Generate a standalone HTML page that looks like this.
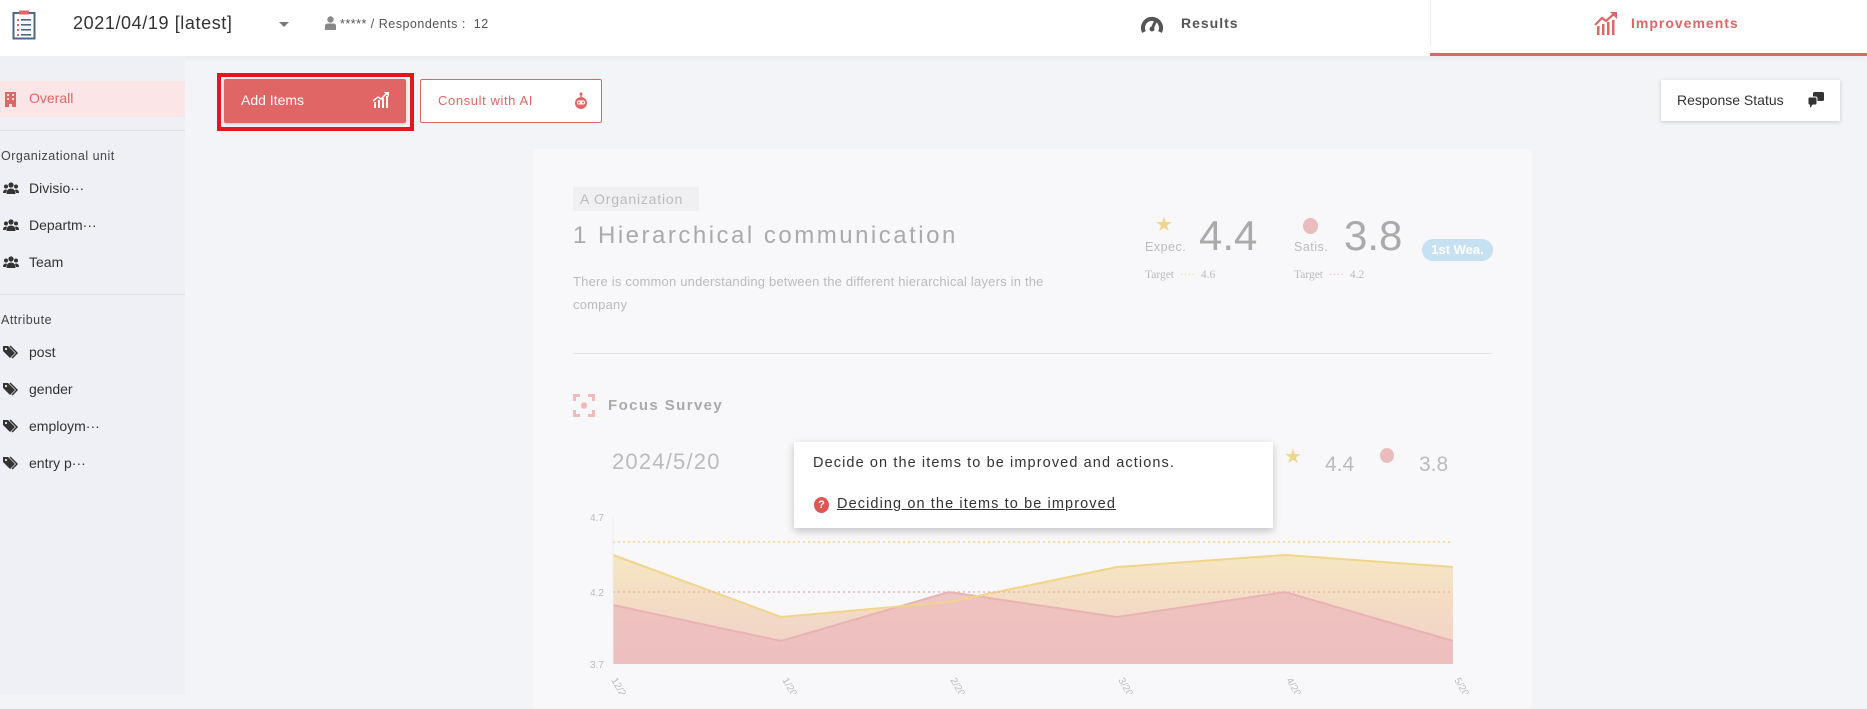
<!DOCTYPE html>
<html><head><meta charset="utf-8">
<style>
*{box-sizing:border-box;margin:0;padding:0}
body{width:1867px;height:694px;overflow:hidden;background:#f3f4f8;font-family:"Liberation Sans",sans-serif;position:relative}
.abs{position:absolute}
.hdr{left:0;top:0;width:1867px;height:56px;background:#fff;box-shadow:0 2px 6px rgba(0,0,0,.05)}
.side{left:0;top:56px;width:185px;height:638px;background:#eff0f6}
.sitem{position:absolute;left:29px;font-size:14px;color:#333;display:flex;align-items:center}
.sec{position:absolute;left:1px;font-size:12.5px;color:#444;letter-spacing:.5px}
.card{left:533px;top:149px;width:999px;height:560px;background:#f8f8fa;border-radius:4px}
</style></head><body>
<div class="abs hdr"></div>
<svg class="abs" style="left:12px;top:10px" width="24" height="30" viewBox="0 0 24 30"><rect x="1.5" y="3" width="21" height="25.5" fill="#fff" stroke="#4a6785" stroke-width="2"/><rect x="7" y="0.5" width="10" height="4" fill="#e06666"/><g fill="#e06666"><rect x="5" y="9" width="2" height="2"/><rect x="5" y="14" width="2" height="2"/><rect x="5" y="19" width="2" height="2"/><rect x="5" y="24" width="2" height="2"/></g><g fill="#4a6785"><rect x="9" y="9" width="10" height="1.6"/><rect x="9" y="14" width="10" height="1.6"/><rect x="9" y="19" width="10" height="1.6"/><rect x="9" y="24" width="10" height="1.6"/></g></svg>
<div class="abs" style="left:73px;top:13px;font-size:18px;color:#333;letter-spacing:.6px">2021/04/19 [latest]</div>
<div class="abs" style="left:279px;top:22px;width:0;height:0;border-left:5px solid transparent;border-right:5px solid transparent;border-top:5px solid #777"></div>
<svg class="abs" style="left:325px;top:16px" width="11" height="14" viewBox="0 0 11 14"><circle cx="5.5" cy="3.5" r="3.2" fill="#888"/><path d="M0 14V10Q0 7.5 3 7.5H8Q11 7.5 11 10V14Z" fill="#888"/></svg>
<div class="abs" style="left:340px;top:17px;font-size:12.5px;color:#555;letter-spacing:.5px">***** / Respondents :&nbsp; 12</div>
<svg class="abs" style="left:1141px;top:14px" width="22" height="20" viewBox="0 0 22 20"><path d="M3 18A9 9 0 1 1 19 18" fill="none" stroke="#555" stroke-width="4"/><path d="M11 15L15 6" stroke="#555" stroke-width="3"/><circle cx="11" cy="15" r="2.5" fill="#555"/></svg>
<div class="abs" style="left:1181px;top:15px;font-size:14px;font-weight:bold;color:#555;letter-spacing:1px">Results</div>
<div class="abs" style="left:1430px;top:0;width:1px;height:46px;background:#eee"></div>
<div class="abs" style="left:1430px;top:53px;width:437px;height:3px;background:#e06666"></div>
<svg class="abs" style="left:1594px;top:11px" width="24" height="24" viewBox="0 0 24 24"><g fill="#e06666"><rect x="3" y="15" width="2.5" height="9"/><rect x="8" y="13" width="2.5" height="11"/><rect x="13" y="11" width="2.5" height="13"/><rect x="18" y="9" width="2.5" height="15"/></g><path d="M1 14L8 7L12 10L21 2" fill="none" stroke="#e06666" stroke-width="2.2"/><path d="M16 1H23V8Z" fill="#e06666"/></svg>
<div class="abs" style="left:1631px;top:15px;font-size:14px;font-weight:bold;color:#e06666;letter-spacing:1px">Improvements</div>
<div class="abs side"></div>
<div class="abs" style="left:0;top:81px;width:185px;height:36px;background:#fbe5e6"></div>
<svg class="abs" style="left:5px;top:92px" width="11" height="15" viewBox="0 0 11 15"><path d="M0 0H11V15H7V12H4V15H0Z" fill="#e06666"/><g fill="#fbe5e6"><rect x="2" y="2" width="2" height="2"/><rect x="7" y="2" width="2" height="2"/><rect x="2" y="6" width="2" height="2"/><rect x="7" y="6" width="2" height="2"/></g></svg>
<div class="sitem" style="top:90px;color:#e06666">Overall</div>
<div class="abs" style="left:0;top:130px;width:185px;height:1px;background:#dfe0e6"></div>
<div class="sec" style="top:149px">Organizational unit</div>
<div class="abs" style="left:0;top:294px;width:185px;height:1px;background:#dfe0e6"></div>
<div class="sec" style="top:313px">Attribute</div>
<svg width="0" height="0" style="position:absolute"><defs>
<g id="ppl"><circle cx="8" cy="3" r="2.6" fill="#333"/><path d="M3.5 12Q3.5 6.5 8 6.5Q12.5 6.5 12.5 12Z" fill="#333"/><circle cx="3" cy="4.5" r="2" fill="#333"/><path d="M0 11Q0 7.5 3 7.5L4 8L3 11Z" fill="#333"/><circle cx="13" cy="4.5" r="2" fill="#333"/><path d="M16 11Q16 7.5 13 7.5L12 8L13 11Z" fill="#333"/></g>
<g id="tag"><path d="M0 1V6L7 13L12 8L5 1Z" fill="#333"/><path d="M7 1L14 8L9 13" fill="none" stroke="#333" stroke-width="1.5"/><circle cx="3" cy="4" r="1.1" fill="#eff0f6"/></g>
</defs></svg>
<svg class="abs" style="left:3px;top:182px" width="16" height="13"><use href="#ppl"/></svg>
<div class="sitem" style="top:180px">Divisio···</div>
<svg class="abs" style="left:3px;top:219px" width="16" height="13"><use href="#ppl"/></svg>
<div class="sitem" style="top:217px">Departm···</div>
<svg class="abs" style="left:3px;top:256px" width="16" height="13"><use href="#ppl"/></svg>
<div class="sitem" style="top:254px">Team</div>
<svg class="abs" style="left:3px;top:345px" width="16" height="14"><use href="#tag"/></svg>
<div class="sitem" style="top:344px">post</div>
<svg class="abs" style="left:3px;top:382px" width="16" height="14"><use href="#tag"/></svg>
<div class="sitem" style="top:381px">gender</div>
<svg class="abs" style="left:3px;top:419px" width="16" height="14"><use href="#tag"/></svg>
<div class="sitem" style="top:418px">employm···</div>
<svg class="abs" style="left:3px;top:456px" width="16" height="14"><use href="#tag"/></svg>
<div class="sitem" style="top:455px">entry p···</div>
<div class="abs" style="left:217px;top:73px;width:197px;height:58px;border:4px solid #e8141e"></div>
<div class="abs" style="left:224px;top:79px;width:182px;height:44px;background:#e06666;border-radius:2px;box-shadow:0 1px 3px rgba(0,0,0,.2)"></div>
<div class="abs" style="left:241px;top:92px;font-size:14px;color:#fff">Add Items</div>
<svg class="abs" style="left:373px;top:92px" width="16" height="16" viewBox="0 0 16 16"><g fill="#fff"><rect x="1" y="10" width="2" height="6"/><rect x="5" y="8" width="2" height="8"/><rect x="9" y="6" width="2" height="10"/><rect x="13" y="4" width="2" height="12"/></g><path d="M0 9L5 5L8 7L14 1" fill="none" stroke="#fff" stroke-width="1.5"/><path d="M11 0H16V5Z" fill="#fff"/></svg>
<div class="abs" style="left:420px;top:79px;width:182px;height:44px;background:#fff;border:1px solid #e06666;border-radius:2px"></div>
<div class="abs" style="left:438px;top:93px;font-size:13px;color:#e06666;letter-spacing:.6px">Consult with AI</div>
<svg class="abs" style="left:574px;top:92px" width="14" height="18" viewBox="0 0 14 18"><circle cx="7" cy="2" r="1.5" fill="#e06666"/><rect x="6.3" y="2" width="1.4" height="3" fill="#e06666"/><circle cx="7" cy="11" r="6" fill="#e06666"/><rect x="3" y="8.5" width="8" height="4" rx="1.5" fill="#fff"/><circle cx="5" cy="10.5" r="1" fill="#e06666"/><circle cx="9" cy="10.5" r="1" fill="#e06666"/></svg>
<div class="abs" style="left:1661px;top:80px;width:179px;height:41px;background:#fff;box-shadow:0 1px 4px rgba(0,0,0,.18)"></div>
<div class="abs" style="left:1677px;top:92px;font-size:14px;color:#333">Response Status</div>
<svg class="abs" style="left:1808px;top:92px" width="16" height="17" viewBox="0 0 16 17"><rect x="5" y="0" width="11" height="9" rx="1.5" fill="#333"/><rect x="0" y="5" width="9" height="8" rx="1.5" fill="#333" stroke="#fff" stroke-width="1"/><path d="M2 12V16L5 12Z" fill="#333"/></svg>
<div class="abs card"></div>
<div class="abs" style="left:573px;top:187px;width:126px;height:24px;background:#f0f0f2"></div>
<div class="abs" style="left:580px;top:191px;font-size:14px;color:#bbb;letter-spacing:.8px">A Organization</div>
<div class="abs" style="left:573px;top:222px;font-size:24px;color:#aaa;letter-spacing:2.5px">1 Hierarchical communication</div>
<div class="abs" style="left:573px;top:270px;width:510px;font-size:13px;line-height:23px;color:#bbb;letter-spacing:.2px">There is common understanding between the different hierarchical layers in the company</div>
<div class="abs" style="left:1155px;top:212px;font-size:20px;color:#f0d68a">★</div>
<div class="abs" style="left:1145px;top:240px;font-size:12.5px;color:#bbb;letter-spacing:.5px">Expec.</div>
<div class="abs" style="left:1199px;top:212px;font-size:42px;color:#aaa">4.4</div>
<div class="abs" style="left:1303px;top:218px;width:15px;height:16px;border-radius:50%;background:#ebbcbc"></div>
<div class="abs" style="left:1294px;top:240px;font-size:12.5px;color:#bbb;letter-spacing:.5px">Satis.</div>
<div class="abs" style="left:1344px;top:212px;font-size:42px;color:#aaa">3.8</div>
<div class="abs" style="left:1422px;top:239px;width:71px;height:22px;border-radius:11px;background:#c6e1f1;color:#fff;font-size:13px;font-weight:bold;text-align:center;line-height:22px">1st Wea.</div>
<div class="abs" style="left:1145px;top:269px;font-size:11.5px;color:#bbb;font-family:'Liberation Serif',serif">Target &nbsp;<span style="color:#f0d68a">····</span>&nbsp; 4.6</div>
<div class="abs" style="left:1294px;top:269px;font-size:11.5px;color:#bbb;font-family:'Liberation Serif',serif">Target &nbsp;<span style="color:#ebbcbc">····</span>&nbsp; 4.2</div>
<div class="abs" style="left:573px;top:353px;width:919px;height:1px;background:#e4e4e8"></div>
<svg class="abs" style="left:573px;top:394px" width="22" height="23" viewBox="0 0 22 23"><g fill="none" stroke="#efbcbc" stroke-width="3"><path d="M1.5 7V1.5H7M15 1.5H20.5V7M20.5 16V21.5H15M7 21.5H1.5V16"/></g><circle cx="11" cy="11.5" r="3.2" fill="#efbcbc"/></svg>
<div class="abs" style="left:608px;top:397px;font-size:15px;font-weight:bold;color:#aaa;letter-spacing:1.4px">Focus Survey</div>
<div class="abs" style="left:612px;top:449px;font-size:22px;color:#bbb;letter-spacing:1.2px">2024/5/20</div>
<div class="abs" style="left:1284px;top:444px;font-size:20px;color:#f0d68a">★</div>
<div class="abs" style="left:1325px;top:453px;font-size:21px;color:#bbb">4.4</div>
<div class="abs" style="left:1380px;top:448px;width:14px;height:15px;border-radius:50%;background:#ebbcbc"></div>
<div class="abs" style="left:1419px;top:453px;font-size:21px;color:#bbb">3.8</div>
<svg class="abs" style="left:580px;top:505px" width="900" height="189" viewBox="580 505 900 189">
<defs><linearGradient id="gy" x1="0" y1="0" x2="0" y2="1"><stop offset="0" stop-color="#f6e6c2"/><stop offset="1" stop-color="#f0cfc8"/></linearGradient></defs>
<g font-size="10" fill="#bbb" font-family="Liberation Sans"><text x="590" y="521">4.7</text><text x="590" y="596">4.2</text><text x="590" y="668">3.7</text></g>
<path d="M613 555L781 617L949 602L1117 567L1285 555L1453 567V664H613Z" fill="url(#gy)"/>
<path d="M613 605L781 641L949 592L1117 617L1285 592L1453 641V664H613Z" fill="#ecbdbd" opacity=".85"/>
<path d="M613 605L781 641L949 592L1117 617L1285 592L1453 641" fill="none" stroke="#eab3b3" stroke-width="2"/>
<path d="M613 555L781 617L949 602L1117 567L1285 555L1453 567" fill="none" stroke="#f1d58c" stroke-width="2"/>
<line x1="613" y1="542" x2="1453" y2="542" stroke="#f1d58c" stroke-width="1.5" stroke-dasharray="2 3"/>
<line x1="613" y1="592" x2="1453" y2="592" stroke="#eab3b3" stroke-width="1.5" stroke-dasharray="2 3"/>
<line x1="613" y1="517" x2="613" y2="664" stroke="#eee"/>
<g font-size="10" fill="#bbb" font-family="Liberation Sans">
<text transform="translate(611,680) rotate(60)">12/20</text>
<text transform="translate(782,680) rotate(60)">1/20</text>
<text transform="translate(950,680) rotate(60)">2/20</text>
<text transform="translate(1118,680) rotate(60)">3/20</text>
<text transform="translate(1286,680) rotate(60)">4/20</text>
<text transform="translate(1454,680) rotate(60)">5/20</text>
</g></svg>
<div class="abs" style="left:794px;top:442px;width:479px;height:86px;background:#fff;box-shadow:0 3px 8px rgba(0,0,0,.22)"></div>
<div class="abs" style="left:813px;top:455px;font-size:14.5px;color:#333;letter-spacing:1.1px">Decide on the items to be improved and actions.</div>
<div class="abs" style="left:814px;top:497px;width:15px;height:16px;border-radius:50%;background:#e05555;color:#fff;font-size:11px;font-weight:bold;text-align:center;line-height:16px">?</div>
<div class="abs" style="left:837px;top:496px;font-size:14.5px;color:#333;letter-spacing:1.1px;text-decoration:underline">Deciding on the items to be improved</div>
</body></html>
